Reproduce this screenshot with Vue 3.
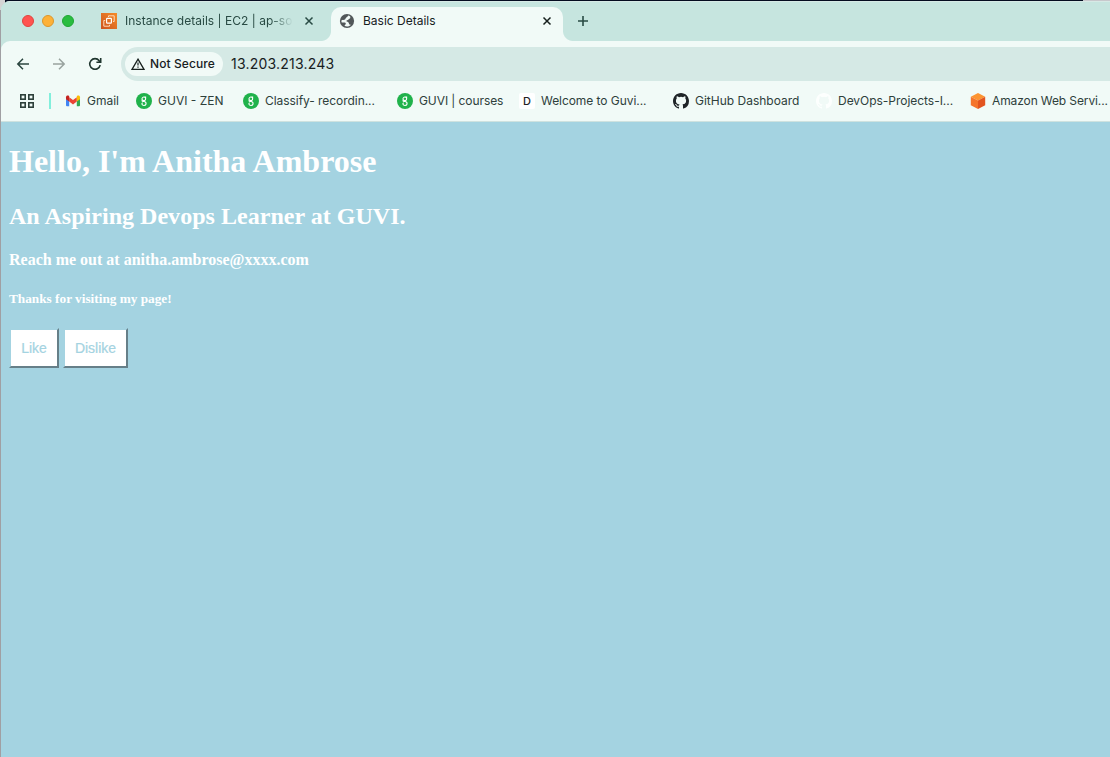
<script setup>
const bookmarks = [
  { label: 'Gmail', icon: 'gmail', cls: 'b-gmail' },
  { label: 'GUVI - ZEN', icon: 'guvi', cls: 'b-zen' },
  { label: 'Classify- recordin...', icon: 'guvi', cls: 'b-classify' },
  { label: 'GUVI | courses', icon: 'guvi', cls: 'b-courses' },
  { label: 'Welcome to Guvi...', icon: 'doc', cls: 'b-welcome' },
  { label: 'GitHub Dashboard', icon: 'github', cls: 'b-github' },
  { label: 'DevOps-Projects-I...', icon: 'github', cls: 'b-devops' },
  { label: 'Amazon Web Servi...', icon: 'aws', cls: 'b-aws' },
]
</script>

<template>
  <div class="desktop">
    <div class="window">
      <header class="tabs">
        <div class="lights"><i class="red"></i><i class="amber"></i><i class="green"></i></div>
        <div class="tab idle">
          <svg class="ico" width="16" height="16" viewBox="0 0 16 16">
            <defs><linearGradient id="ec2" x1="0" y1="1" x2="1" y2="0"><stop offset="0" stop-color="#cc5420" /><stop offset="1" stop-color="#f68b28" /></linearGradient></defs>
            <rect width="16" height="16" fill="url(#ec2)" />
            <g fill="none" stroke="#ffd9b8" stroke-width="1"><rect x="5.6" y="5.4" width="4.8" height="4.8" rx=".7" stroke="#fff" stroke-width="1.2" /><path d="M7.5 4V2.8H13.2V8.5H12M4.2 7.5H2.8V13.2H8.5V11.8" /></g>
          </svg>
          <span class="fade">Instance details | EC2 | ap-sou</span>
          <svg class="close" width="10" height="10" viewBox="0 0 10 10"><path d="M1.5 1.5l7 7M8.5 1.5l-7 7" stroke="#294b44" stroke-width="1.5" /></svg>
        </div>
        <div class="tab active">
          <svg class="ico" width="16" height="16" viewBox="0 0 16 16">
            <circle cx="8" cy="8" r="7.1" fill="#515759" />
            <path d="M9.8 2.4C8.5 2.6 8.7 3.9 7.7 4.3C6.4 4.8 6.9 5.9 6 6.4C5 7 3.7 6.6 2.4 7.4C2.3 8.2 2.5 9 2.8 9.6H5.7C6.9 9.6 7.1 10.9 6.5 11.5L5.7 12.2V13.1C8 14.1 10.6 13.4 12 11.8C11.1 11.9 10.2 11.7 10 10.8C9.8 9.6 9 8.7 7.7 8.6C7 8.1 7.8 7.1 8.8 7.1C9.8 7 9.4 5.9 10.4 5.8C11.4 5.7 11.4 4.7 11.2 3.5Z" fill="#f1faf7" />
          </svg>
          <span>Basic Details</span>
          <svg class="close" width="10" height="10" viewBox="0 0 10 10"><path d="M1.5 1.5l7 7M8.5 1.5l-7 7" stroke="#17201e" stroke-width="1.5" /></svg>
        </div>
        <svg class="plus" width="12" height="12" viewBox="0 0 12 12"><path d="M6 1v10M1 6h10" stroke="#294b44" stroke-width="1.6" /></svg>
      </header>

      <nav class="toolbar">
        <svg class="nav" width="14" height="14" viewBox="0 0 14 14"><path d="M13 7H2M7 1.8L1.8 7L7 12.2" fill="none" stroke="#2c4640" stroke-width="1.5" /></svg>
        <svg class="nav fwd" width="14" height="14" viewBox="0 0 14 14"><path d="M1 7H12M7 1.8L12.2 7L7 12.2" fill="none" stroke="#99a39f" stroke-width="1.5" /></svg>
        <svg class="nav reload" width="14" height="14" viewBox="0 0 14 14"><path d="M12.2 8.1A5.3 5.3 0 1 1 11.2 3.7L12 4.6M12.7 1V5.3H8.4" fill="none" stroke="#20362f" stroke-width="1.6" /></svg>
        <div class="omnibox">
          <div class="chip">
            <svg width="14" height="12" viewBox="0 0 14 12"><path d="M7 1.2L13 11.3H1Z" fill="none" stroke="#17201e" stroke-width="1.3" /><path d="M7 4.4V7.5M7 8.5V9.8" stroke="#17201e" stroke-width="1.2" /></svg>
            <span>Not Secure</span>
          </div>
          <span class="url">13.203.213.243</span>
        </div>
      </nav>

      <div class="bookmarks">
        <svg class="grid" width="16" height="16" viewBox="0 0 16 16"><g fill="none" stroke="#2e403b" stroke-width="1.6"><rect x="1.8" y="1.8" width="4.4" height="4.4" /><rect x="9.8" y="1.8" width="4.4" height="4.4" /><rect x="1.8" y="9.8" width="4.4" height="4.4" /><rect x="9.8" y="9.8" width="4.4" height="4.4" /></g></svg>
        <i class="sep"></i>
        <div v-for="b in bookmarks" :key="b.label" class="bookmark" :class="b.cls">
          <svg v-if="b.icon === 'gmail'" class="ico" width="16" height="16" viewBox="0 0 16 16">
            <path d="M1 4V12.3Q1 13.2 2 13.2H4.2V6Z" fill="#4285f4" /><path d="M11.8 6V13.2H14Q15 13.2 15 12.3V4Z" fill="#34a853" />
            <path d="M4.2 4.2L8 7.1L11.8 4.2V8.6L8 11.4L4.2 8.6Z" fill="#ea4335" /><path d="M1 4.2C1 2.4 2.7 2 3.8 2.8L4.2 3.2V8.6L1 6.2Z" fill="#c5221f" /><path d="M15 4.2C15 2.4 13.3 2 12.2 2.8L11.8 3.2V8.6L15 6.2Z" fill="#fbbc04" />
          </svg>
          <svg v-else-if="b.icon === 'guvi'" class="ico" width="16" height="16" viewBox="0 0 16 16">
            <circle cx="8" cy="8" r="8" fill="#20b24b" /><g fill="none" stroke="#fff" stroke-width="1.1"><path d="M9.6 3.5V6A1.8 1.8 0 1 1 8.2 4.1H9.6" /><path d="M6.2 7.3C5.6 8.3 6.8 8.5 8 8.5C10.8 8.6 10.7 12.5 8 12.5C5.8 12.5 5.4 10.5 6.6 9.6" /></g>
          </svg>
          <span v-else-if="b.icon === 'doc'" class="doc">D</span>
          <svg v-else-if="b.icon === 'github'" class="ico gh" width="16" height="16" viewBox="0 0 16 16"><path d="M8 0C3.58 0 0 3.58 0 8c0 3.54 2.29 6.53 5.47 7.59.4.07.55-.17.55-.38 0-.19-.01-.82-.01-1.49-2.01.37-2.53-.49-2.69-.94-.09-.23-.48-.94-.82-1.13-.28-.15-.68-.52-.01-.53.63-.01 1.08.58 1.23.82.72 1.21 1.87.87 2.33.66.07-.52.28-.87.51-1.07-1.78-.2-3.64-.89-3.64-3.95 0-.87.31-1.59.82-2.15-.08-.2-.36-1.02.08-2.12 0 0 .67-.21 2.2.82a7.6 7.6 0 0 1 4 0c1.53-1.04 2.2-.82 2.2-.82.44 1.1.16 1.92.08 2.12.51.56.82 1.27.82 2.15 0 3.07-1.87 3.75-3.65 3.95.29.25.54.73.54 1.48 0 1.07-.01 1.93-.01 2.2 0 .21.15.46.55.38A8 8 0 0 0 16 8c0-4.42-3.58-8-8-8Z" /></svg>
          <svg v-else class="ico" width="16" height="16" viewBox="0 0 16 16"><path d="M8 0L15.2 3.8L8 7.6L.8 3.8Z" fill="#fc9432" /><path d="M.8 3.8L8 7.6V16L.8 12.2Z" fill="#f5752c" /><path d="M15.2 3.8L8 7.6V16L15.2 12.2Z" fill="#e2541f" /></svg>
          <span class="label">{{ b.label }}</span>
        </div>
      </div>

      <main class="page">
        <h1>Hello, I'm Anitha Ambrose</h1>
        <h2>An Aspiring Devops Learner at GUVI.</h2>
        <h4>Reach me out at anitha.ambrose@xxxx.com</h4>
        <h5>Thanks for visiting my page!</h5>
        <div class="buttons"><button>Like</button><button>Dislike</button></div>
      </main>
    </div>
  </div>
</template>

<style>
body { margin: 0; overflow: hidden; }
</style>

<style scoped>
* { box-sizing: border-box; }
svg, i { display: block; flex: none; }
.desktop { width: 1110px; height: 757px; padding: 1px 0 0 1px; overflow: hidden; background: linear-gradient(90deg, #d4d4d4 5px, #040c20 5px 1083px, #c8c8cc 1083px) top / 100% 10px no-repeat, #a09fa3; }
.window { height: 756px; display: flex; flex-direction: column; overflow: hidden; border-top-left-radius: 9px; background: #c6e5df; font: 12px/16px Inter, "Liberation Sans", sans-serif; color: #2e403b; white-space: nowrap; }
.tabs { height: 40px; flex: none; display: flex; border-top: 1px solid #d7eae6; background: #c6e5df; }
.lights { display: flex; gap: 8px; padding: 13px 0 0 21px; width: 100px; flex: none; }
.lights i { width: 12px; height: 12px; border-radius: 50%; border: 1px solid #e0443e; background: #ff5350; }
.lights .amber { background: #fdb137; border-color: #dc962b; }
.lights .green { background: #29bd40; border-color: #20a634; }
.tab { display: flex; align-items: center; height: 34px; position: relative; }
.idle { width: 230px; margin-top: 2px; }
.fade { width: 168px; margin-left: 8px; color: #294b44; letter-spacing: .02px; -webkit-mask-image: linear-gradient(90deg, #000 145px, transparent 168px); mask-image: linear-gradient(90deg, #000 145px, transparent 168px); }
.idle .close { margin-left: 11px; }
.active { width: 232px; height: 34px; margin-top: 5px; padding: 0 11px 6px 8px; border-radius: 10px 10px 0 0; background: #f1faf7; color: #17201e; }
.active span { margin-left: 8px; }
.active .close { margin-left: auto; }
.active::before, .active::after { content: ""; position: absolute; bottom: 0; width: 10px; height: 10px; }
.active::before { left: -10px; background: radial-gradient(circle at 0 0, transparent 9.5px, #f1faf7 10.5px); }
.active::after { right: -10px; background: radial-gradient(circle at 100% 0, transparent 9.5px, #f1faf7 10.5px); }
.plus { margin: 13px 0 0 14px; }
.toolbar { height: 40px; flex: none; display: flex; align-items: center; padding: 6px 0 0 15px; border-top-left-radius: 9px; background: #f1faf7; }
.fwd, .reload { margin-left: 22px; }
.omnibox { flex: 1; height: 34px; margin-left: 19px; display: flex; align-items: center; padding-left: 4px; background: #d5e9e5; border-radius: 17px 0 0 17px; }
.chip { width: 98px; height: 24px; padding-left: 6px; display: flex; align-items: center; gap: 5px; border-radius: 12px; background: #f1faf7; color: #17201e; font-weight: 500; letter-spacing: .1px; }
.url { margin-left: 8px; font-size: 14px; letter-spacing: .21px; color: #17201e; }
.bookmarks { height: 41px; flex: none; display: flex; align-items: center; padding-left: 18px; border-bottom: 1px solid #cfe2df; background: #f1faf7; }
.sep { width: 2px; height: 16px; margin: 0 14px 0 14px; background: #82efdc; }
.bookmark { display: flex; align-items: center; gap: 6px; flex: none; }
.b-gmail { width: 71px; }
.b-zen { width: 107px; }
.b-classify { width: 154px; letter-spacing: -.05px; }
.b-courses { width: 122px; letter-spacing: -.08px; }
.b-welcome { width: 154px; letter-spacing: -.06px; }
.b-github { width: 143px; }
.b-devops { width: 154px; letter-spacing: -.03px; }
.b-aws { letter-spacing: -.11px; }
.doc { width: 16px; height: 16px; border-radius: 2px; background: #fff; text-align: center; font-size: 11px; font-weight: 500; color: #222; }
.gh { fill: #1f2428; }
.b-devops .gh { fill: #fdfffe; }
.page { flex: 1; padding: 0 8px; background: #a4d3e1; color: #fff; font: 16px/normal "Liberation Serif", serif; }
h1, h2, h4, h5 { font-weight: 700; }
h1 { margin: 21px 0 0; font-size: 32px; line-height: 37px; }
h2 { margin: 23px 0 0; font-size: 24px; line-height: 27px; letter-spacing: .03px; }
h4 { margin: 21px 0 0; font-size: 16px; line-height: 18px; }
h5 { margin: 22px 0 0; font-size: 13.28px; line-height: 15px; }
.buttons { display: flex; gap: 4px; margin-top: 22px; }
button { height: 40px; width: 50px; padding: 0; border: 2px solid; border-color: #a4d3e1 #667f88 #667f88 #a4d3e1; background: #fff; color: #a4d3e1; font: 14px/16px "Liberation Sans", sans-serif; -webkit-text-stroke: .2px #a4d3e1; }
button + button { width: 65px; }
</style>
